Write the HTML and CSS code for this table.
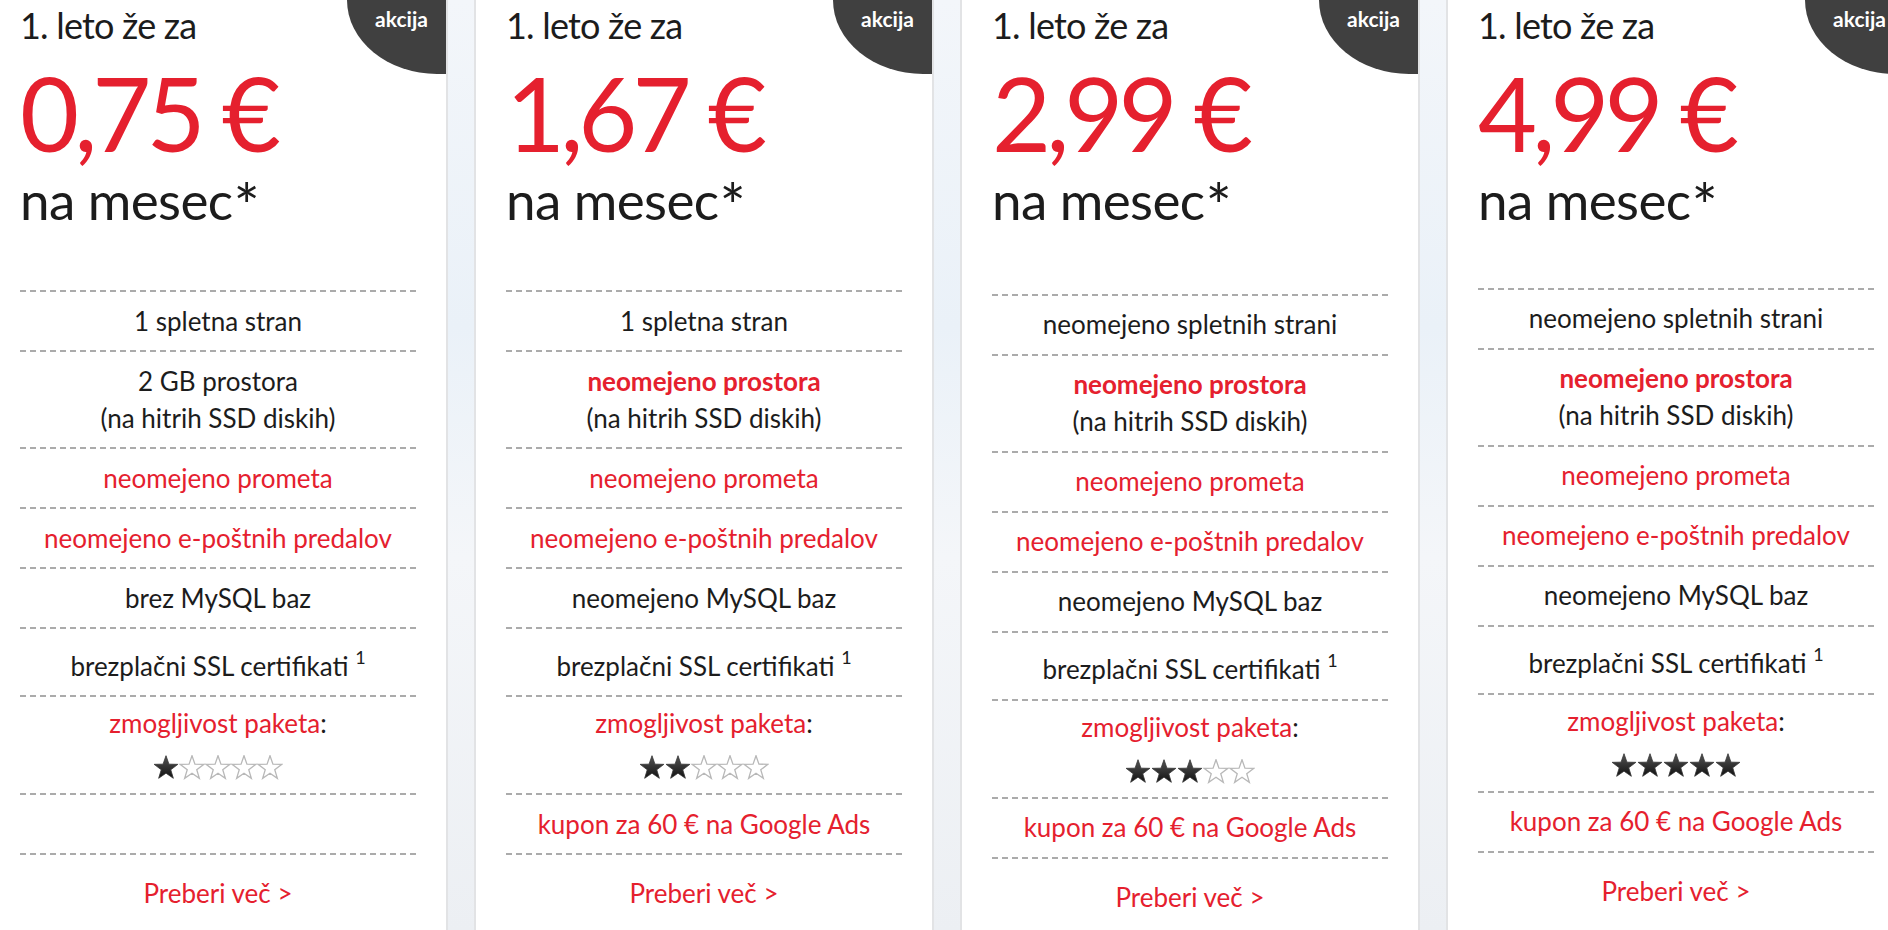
FILE: index.html
```html
<!DOCTYPE html>
<html lang="sl">
<head>
<meta charset="utf-8">
<title>Paketi gostovanja</title>
<link rel="stylesheet" href="styles.css">
</head>
<body>
<svg class="defs" width="0" height="0" aria-hidden="true">
  <defs>
    <linearGradient id="starFill" x1="0" y1="0" x2="0" y2="1">
      <stop offset="0" stop-color="#555"/>
      <stop offset="1" stop-color="#111"/>
    </linearGradient>
    <polygon id="star" points="13,0.7 15.94,9.15 24.89,9.34 17.76,14.75 20.35,23.31 13,18.2 5.65,23.31 8.24,14.75 1.11,9.34 10.06,9.15"/>
  </defs>
</svg>
<main class="plans">
  <article class="card">
    <div class="badge">akcija</div>
    <header class="head">
      <p class="lead">1. leto že za</p>
      <p class="price">0,75 €</p>
      <p class="per">na mesec<span class="ast">*</span></p>
    </header>
    <ul class="features">
      <li>1 spletna stran</li>
      <li>2 GB prostora<br>(na hitrih SSD diskih)</li>
      <li class="hl">neomejeno prometa</li>
      <li class="hl">neomejeno e-poštnih predalov</li>
      <li>brez MySQL baz</li>
      <li class="ssl">brezplačni SSL certifikati <sup>1</sup></li>
      <li class="rating"><span class="hl">zmogljivost paketa</span>:
        <svg class="stars" width="130" height="25" viewBox="0 0 130 25">
          <use href="#star" x="0" class="on"/><use href="#star" x="26" class="off"/><use href="#star" x="52" class="off"/><use href="#star" x="78" class="off"/><use href="#star" x="104" class="off"/>
        </svg>
      </li>
      <li class="blank"></li>
      <li class="more"><a href="#">Preberi več &gt;</a></li>
    </ul>
  </article>

  <article class="card">
    <div class="badge">akcija</div>
    <header class="head">
      <p class="lead">1. leto že za</p>
      <p class="price">1,67 €</p>
      <p class="per">na mesec<span class="ast">*</span></p>
    </header>
    <ul class="features">
      <li>1 spletna stran</li>
      <li><strong class="hl">neomejeno prostora</strong><br>(na hitrih SSD diskih)</li>
      <li class="hl">neomejeno prometa</li>
      <li class="hl">neomejeno e-poštnih predalov</li>
      <li>neomejeno MySQL baz</li>
      <li class="ssl">brezplačni SSL certifikati <sup>1</sup></li>
      <li class="rating"><span class="hl">zmogljivost paketa</span>:
        <svg class="stars" width="130" height="25" viewBox="0 0 130 25">
          <use href="#star" x="0" class="on"/><use href="#star" x="26" class="on"/><use href="#star" x="52" class="off"/><use href="#star" x="78" class="off"/><use href="#star" x="104" class="off"/>
        </svg>
      </li>
      <li class="hl">kupon za 60 € na Google Ads</li>
      <li class="more"><a href="#">Preberi več &gt;</a></li>
    </ul>
  </article>

  <article class="card card--low">
    <div class="badge">akcija</div>
    <header class="head">
      <p class="lead">1. leto že za</p>
      <p class="price">2,99 €</p>
      <p class="per">na mesec<span class="ast">*</span></p>
    </header>
    <ul class="features">
      <li>neomejeno spletnih strani</li>
      <li><strong class="hl">neomejeno prostora</strong><br>(na hitrih SSD diskih)</li>
      <li class="hl">neomejeno prometa</li>
      <li class="hl">neomejeno e-poštnih predalov</li>
      <li>neomejeno MySQL baz</li>
      <li class="ssl">brezplačni SSL certifikati <sup>1</sup></li>
      <li class="rating"><span class="hl">zmogljivost paketa</span>:
        <svg class="stars" width="130" height="25" viewBox="0 0 130 25">
          <use href="#star" x="0" class="on"/><use href="#star" x="26" class="on"/><use href="#star" x="52" class="on"/><use href="#star" x="78" class="off"/><use href="#star" x="104" class="off"/>
        </svg>
      </li>
      <li class="hl">kupon za 60 € na Google Ads</li>
      <li class="more"><a href="#">Preberi več &gt;</a></li>
    </ul>
  </article>

  <article class="card card--high">
    <div class="badge">akcija</div>
    <header class="head">
      <p class="lead">1. leto že za</p>
      <p class="price">4,99 €</p>
      <p class="per">na mesec<span class="ast">*</span></p>
    </header>
    <ul class="features">
      <li>neomejeno spletnih strani</li>
      <li><strong class="hl">neomejeno prostora</strong><br>(na hitrih SSD diskih)</li>
      <li class="hl">neomejeno prometa</li>
      <li class="hl">neomejeno e-poštnih predalov</li>
      <li>neomejeno MySQL baz</li>
      <li class="ssl">brezplačni SSL certifikati <sup>1</sup></li>
      <li class="rating"><span class="hl">zmogljivost paketa</span>:
        <svg class="stars" width="130" height="25" viewBox="0 0 130 25">
          <use href="#star" x="0" class="on"/><use href="#star" x="26" class="on"/><use href="#star" x="52" class="on"/><use href="#star" x="78" class="on"/><use href="#star" x="104" class="on"/>
        </svg>
      </li>
      <li class="hl">kupon za 60 € na Google Ads</li>
      <li class="more"><a href="#">Preberi več &gt;</a></li>
    </ul>
  </article>
</main>
</body>
</html>
```

FILE: styles.css
```css
* { box-sizing: border-box; }

html, body {
  margin: 0;
  padding: 0;
  height: 100%;
  overflow: hidden;
}

body {
  font-family: Lato, "Open Sans", "Liberation Sans", sans-serif;
  color: #1c1c1c;
  background: linear-gradient(180deg, #f3f6fa 0%, #eaf1f8 35%, #f4f6f9 60%, #eceff3 100%);
}

.defs { position: absolute; }

.plans {
  display: flex;
  gap: 26px;
  margin: -2px 0 0 -12px;
}

.card {
  position: relative;
  flex: 0 0 460px;
  background: #fff;
  border: 2px solid #e2e3e5;
  padding: 0 30px 60px;
}

.badge {
  position: absolute;
  top: 0;
  right: 0;
  width: 99px;
  height: 74px;
  background: #404040;
  color: #fff;
  font-weight: 700;
  font-size: 21px;
  line-height: 1;
  text-align: center;
  padding: 8px 0 0 10px;
  border-bottom-left-radius: 90px 74px;
}

.head p { margin: 0; }

.head { padding-top: 3px; margin-bottom: 69px; }
.card--low .head { margin-bottom: 72.5px; }
.card--high .head { margin-bottom: 66.5px; }

.lead {
  font-size: 36px;
  line-height: 44px;
  letter-spacing: -0.8px;
}

.price {
  font-size: 102px;
  line-height: 131px;
  color: #e5202e;
  letter-spacing: -5px;
}

.per {
  font-size: 53px;
  line-height: 43px;
  letter-spacing: -0.6px;
}

.ast {
  font-size: 62px;
  line-height: 0;
  vertical-align: -9px;
  margin-left: 1px;
}

.features {
  list-style: none;
  margin: 0;
  padding: 0;
  font-size: 26px;
  line-height: 37px;
  text-align: center;
}

.features li {
  padding: 12.5px 0 10.5px;
  background-image: linear-gradient(to right, #ababab 60%, transparent 60%);
  background-size: 10px 2px;
  background-repeat: repeat-x;
  background-position: left top;
}

.hl { color: #e5202e; }
strong.hl { font-weight: 700; }

.features li.ssl { padding-top: 20.5px; }

sup {
  font-size: 18px;
  line-height: 0;
  vertical-align: 12px;
}

.features li.rating { padding: 10px 0 13px; }

.stars {
  display: block;
  margin: 13px auto 0;
}

.stars .on { fill: url(#starFill); stroke: #333; stroke-width: 0.8; }
.stars .off { fill: #fff; stroke: #b8b8b8; stroke-width: 1.3; }

.features li.blank { height: 60px; }

.features li.more { padding-top: 22px; }

.more a {
  color: #e5202e;
  text-decoration: none;
}
```
